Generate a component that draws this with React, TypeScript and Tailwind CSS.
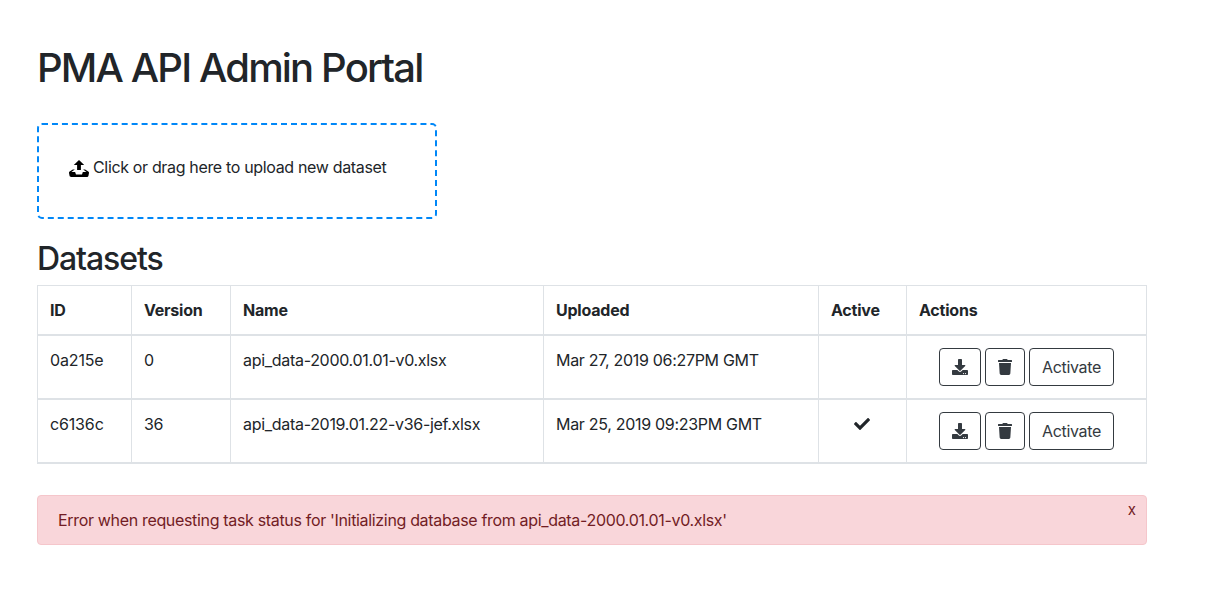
import { FaCheck, FaDownload, FaTrash } from "react-icons/fa";

type Dataset = { id: string; version: string; name: string; uploaded: string; active: boolean };

const datasets: Dataset[] = [
  { id: "0a215e", version: "0", name: "api_data-2000.01.01-v0.xlsx", uploaded: "Mar 27, 2019 06:27PM GMT", active: false },
  { id: "c6136c", version: "36", name: "api_data-2019.01.22-v36-jef.xlsx", uploaded: "Mar 25, 2019 09:23PM GMT", active: true },
];

const columns = "grid grid-cols-[94px_99px_313px_275px_88px_240px]";
const cell = "border-r border-[#dee2e6] px-3 pt-3";
const button = "flex h-[38px] items-center justify-center rounded border border-[#343a40] bg-white text-[#343a40]";

function UploadIcon() {
  return (
    <svg className="mt-[5px] h-[17px] w-5 shrink-0" viewBox="0 0 20 17" fill="#000">
      <path d="M10 0l-5.2 4.9h3.3v5.1h3.8v-5.1h3.3l-5.2-4.9zm9.3 11.5l-3.2-2.1h-2l3.4 2.6h-3.5c-.1 0-.2.1-.2.1l-.8 2.3h-6l-.8-2.2c-.1-.1-.1-.2-.2-.2h-3.6l3.4-2.6h-2l-3.2 2.100c-.4.3-.7 1-.6 1.500l.6 3.100c.1.500.7.900 1.200.900h16.300c.6 0 1.100-.4 1.300-.9l.6-3.100c.1-.5-.2-1.200-.7-1.500z" />
    </svg>
  );
}

export default function App() {
  return (
    <main className="h-[601px] w-[1206px] bg-white pl-[37px] pt-[44px] font-['Inter',sans-serif] text-base text-[#212529]">
      <h1 className="h-12 text-[40px] font-medium leading-[48px] tracking-[-1.84px]">PMA API Admin Portal</h1>
      <div className="mt-[31px] flex h-24 w-[400px] items-start rounded-[5px] border-2 border-dashed border-[#0087f7] pl-[30px] pt-[30px]">
        <UploadIcon />
        <span className="ml-1 leading-6 tracking-[-0.34px]">Click or drag here to upload new dataset</span>
      </div>
      <h2 className="mt-[21px] h-[38px] text-[32px] font-medium leading-[38px] tracking-[-1.1px]">Datasets</h2>
      <section className="mt-[7px] w-[1110px] border-l border-t border-[#dee2e6]">
        <div className={`${columns} h-[50px] border-b-2 border-[#dee2e6] font-bold tracking-[-0.22px]`}>
          {["ID", "Version", "Name", "Uploaded", "Active", "Actions"].map((title) => (
            <div key={title} className={cell}>{title}</div>
          ))}
        </div>
        {datasets.map((d) => (
          <div key={d.id} className={`${columns} h-16 border-b-2 border-[#dee2e6] tracking-[-0.3px]`}>
            <div className={`${cell} tracking-[-0.15px]`}>{d.id}</div>
            <div className={cell}>{d.version}</div>
            <div className={cell}>{d.name}</div>
            <div className={cell}>{d.uploaded}</div>
            <div className={`${cell} flex justify-center`}>{d.active && <FaCheck className="mr-px mt-1" />}</div>
            <div className={`${cell} flex justify-center gap-1`}>
              <button className={`${button} w-[42px]`} aria-label="Download"><FaDownload /></button>
              <button className={`${button} w-10`} aria-label="Delete"><FaTrash /></button>
              <button className={`${button} w-[85px]`}>Activate</button>
            </div>
          </div>
        ))}
      </section>
      <div className="mt-[31px] flex h-[50px] w-[1110px] justify-between rounded border border-[#f5c6cb] bg-[#f9d6da] pl-5 pr-[10px] text-[#721c24]">
        <p className="pt-3 tracking-[-0.33px]">Error when requesting task status for 'Initializing database from api_data-2000.01.01-v0.xlsx'</p>
        <button className="h-7 text-[15px] leading-7">x</button>
      </div>
    </main>
  );
}
